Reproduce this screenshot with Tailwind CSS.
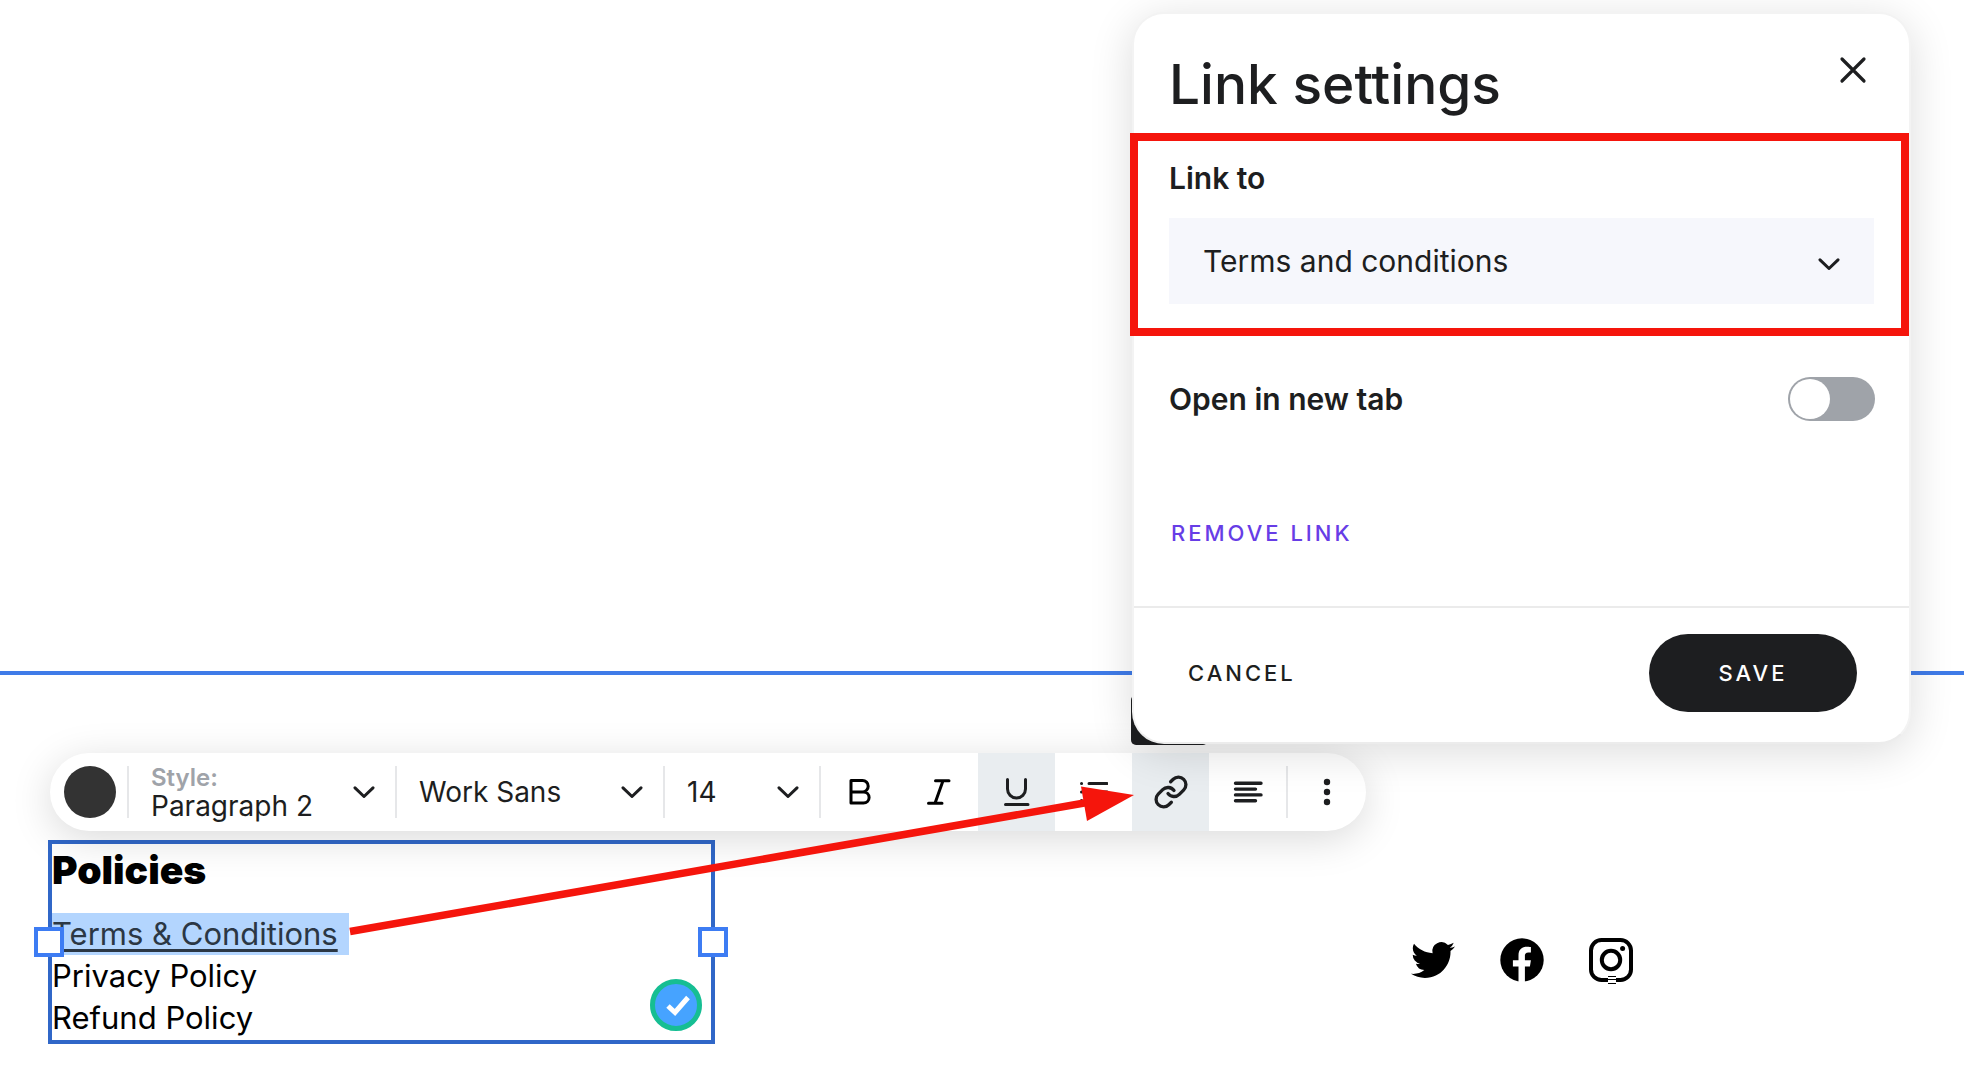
<!DOCTYPE html>
<html lang="en">
<head>
    <meta charset="UTF-8">
    <meta name="viewport" content="width=device-width, initial-scale=1.0">
    <title>Site editor - Link settings</title>
    <script src="https://cdn.jsdelivr.net/npm/@tailwindcss/browser@4"></script>
</head>
<body class="relative min-h-screen overflow-x-hidden bg-white font-['Inter',sans-serif] text-[#1d1e20]">
    <main>
        <section class="h-[675px] border-b-4 border-[#3f7be8]" aria-label="Page section"></section>

        <footer class="relative pt-[78px]">
            <!-- Text toolbar -->
            <div role="toolbar" aria-label="Text formatting" class="relative z-10 ml-[50px] flex h-[78px] w-max items-center rounded-full bg-white pl-[14px] shadow-[0_8px_40px_rgba(0,0,0,0.15)]">
                <button aria-label="Text color" class="mr-[11px] size-[52px] rounded-full bg-[#333]"></button>
                <div class="relative h-[52px] w-[268px] border-l-2 border-[#e6e7e9] pl-[22px]">
                    <label for="text-style" class="block text-[24px] leading-6 font-semibold text-[#9fa3a9]">Style:</label>
                    <select id="text-style" class="block h-8 w-[220px] appearance-none bg-transparent text-[28px] leading-8">
                        <option>Paragraph 2</option>
                    </select>
                    <svg class="pointer-events-none absolute top-[20px] right-[20px] h-[12px] w-[22px]" viewBox="0 0 22 12" fill="none" stroke="currentColor" stroke-width="3" stroke-linecap="round" stroke-linejoin="round"><path d="M2 1.8l9 8.7 9-8.7"/></svg>
                </div>
                <div class="relative flex h-[52px] w-[268px] items-center border-l-2 border-[#e6e7e9] pl-[22px]">
                    <select aria-label="Font" class="w-[220px] appearance-none bg-transparent text-[28px] leading-9">
                        <option>Work Sans</option>
                    </select>
                    <svg class="pointer-events-none absolute top-[20px] right-[20px] h-[12px] w-[22px]" viewBox="0 0 22 12" fill="none" stroke="currentColor" stroke-width="3" stroke-linecap="round" stroke-linejoin="round"><path d="M2 1.8l9 8.7 9-8.7"/></svg>
                </div>
                <div class="relative flex h-[52px] w-[156px] items-center border-l-2 border-[#e6e7e9] pl-[22px]">
                    <select aria-label="Font size" class="w-[110px] appearance-none bg-transparent text-[28px] leading-9">
                        <option>14</option>
                    </select>
                    <svg class="pointer-events-none absolute top-[20px] right-[20px] h-[12px] w-[22px]" viewBox="0 0 22 12" fill="none" stroke="currentColor" stroke-width="3" stroke-linecap="round" stroke-linejoin="round"><path d="M2 1.8l9 8.7 9-8.7"/></svg>
                </div>
                <div class="h-[52px] w-[2px] bg-[#e6e7e9]"></div>
                <div class="ml-[3px] flex h-full">
                    <button aria-label="Bold" class="flex w-[77px] items-center justify-center">
                        <svg class="size-7" viewBox="0 0 28 28" fill="none" stroke="#000" stroke-width="3" stroke-linejoin="round"><path d="M2 2.5h11.5a5.7 5.7 0 0 1 0 11.4H2zM2 13.9h12.5a5.6 5.6 0 0 1 0 11.2H2z"/></svg>
                    </button>
                    <button aria-label="Italic" class="flex w-[77px] items-center justify-center">
                        <svg class="size-7" viewBox="0 0 28 28" fill="none" stroke="#000" stroke-width="3" stroke-linecap="round"><path d="M9.5 2.7h13.5M2.5 25.2h13.5M17 2.7l-8 22.5"/></svg>
                    </button>
                    <button aria-label="Underline" aria-pressed="true" class="flex w-[77px] items-center justify-center bg-[#e9edf0]">
                        <svg class="size-7" viewBox="0 0 28 28" fill="none" stroke="currentColor" stroke-width="3" stroke-linecap="round"><path d="M4.5 1.5v9.5a9 9 0 0 0 18 0v-9.5M2.5 26.5h22.500"/></svg>
                    </button>
                    <button aria-label="Bulleted list" class="flex w-[77px] items-center justify-center">
                        <svg class="size-7" viewBox="0 0 28 28" fill="none" stroke="currentColor" stroke-width="3" stroke-linecap="round"><path d="M1.500 5.500h.1M9 5.500h18M1.500 14h.1M9 14h18M1.500 22.500h.1M9 22.500h18"/></svg>
                    </button>
                    <button aria-label="Link" aria-pressed="true" class="flex w-[77px] items-center justify-center bg-[#e9edf0]">
                        <svg class="size-[36px]" viewBox="0 0 24 24" fill="none" stroke="currentColor" stroke-width="2.2" stroke-linecap="round" stroke-linejoin="round"><path d="M10 13a5 5 0 0 0 7.54.54l3-3a5 5 0 0 0-7.07-7.07l-1.72 1.71"/><path d="M14 11a5 5 0 0 0-7.54-.54l-3 3a5 5 0 0 0 7.07 7.07l1.71-1.71"/></svg>
                    </button>
                    <button aria-label="Align left" class="flex w-[77px] items-center justify-center">
                        <svg class="size-[30px]" viewBox="0 0 30 30" fill="none" stroke="currentColor" stroke-width="3.4" stroke-linecap="round"><path d="M2.500 6.300h25.500M2.500 12.100h20M2.500 17.900h25.500M2.500 23.700h20"/></svg>
                    </button>
                </div>
                <div class="h-[52px] w-[2px] bg-[#e6e7e9]"></div>
                <button aria-label="More options" class="flex h-full w-[78px] items-center justify-center">
                    <svg class="size-7" viewBox="0 0 28 28" fill="currentColor"><circle cx="14" cy="4" r="3.200"/><circle cx="14" cy="14" r="3.200"/><circle cx="14" cy="24" r="3.200"/></svg>
                </button>
            </div>

            <div class="mt-[9px] flex items-start">
                <!-- Selected text block -->
                <div class="relative ml-12 w-[667px] border-4 border-[#3067c8] pt-1 pb-[1px] text-black">
                    <h2 class="text-[39px] leading-[44px] font-black">Policies</h2>
                    <ul class="mt-[21px] text-[31px] leading-[42px]">
                        <li><a href="#terms" class="inline-block bg-[#b3d5fe] pr-[11px] text-[#2b3744] underline decoration-3 underline-offset-4">Terms &amp; Conditions</a></li>
                        <li><a href="#privacy">Privacy Policy</a></li>
                        <li><a href="#refund">Refund Policy</a></li>
                    </ul>
                    <span class="absolute top-1/2 -left-[18px] size-[30px] -translate-y-1/2 border-4 border-[#3d7cf3] bg-white"></span>
                    <span class="absolute top-1/2 -right-[17px] size-[30px] -translate-y-1/2 border-4 border-[#3d7cf3] bg-white"></span>
                    <svg class="absolute right-[9px] bottom-[9px] size-[52px]" viewBox="0 0 52 52" fill="none"><circle cx="26" cy="26" r="23.5" fill="#46a3ff" stroke="#16be93" stroke-width="5"/><path d="M18 27l7 6.5L38 18.5" stroke="#fff" stroke-width="5"/></svg>
                </div>

                <nav aria-label="Social links" class="mt-[98px] ml-[696px] flex gap-[45px] text-black">
                    <a href="#twitter" aria-label="Twitter">
                        <svg class="size-[44px]" viewBox="0 0 24 24" fill="currentColor"><path d="M23.953 4.57a10 10 0 01-2.825.775 4.958 4.958 0 002.163-2.723c-.951.555-2.005.959-3.127 1.184a4.92 4.92 0 00-8.384 4.482C7.69 8.095 4.067 6.13 1.64 3.162a4.822 4.822 0 00-.666 2.475c0 1.71.87 3.213 2.188 4.096a4.904 4.904 0 01-2.228-.616v.06a4.923 4.923 0 003.946 4.827 4.996 4.996 0 01-2.212.085 4.936 4.936 0 004.604 3.417 9.867 9.867 0 01-6.102 2.105c-.39 0-.779-.023-1.17-.067a13.995 13.995 0 007.557 2.209c9.053 0 13.998-7.496 13.998-13.985 0-.21 0-.42-.015-.63A9.935 9.935 0 0024 4.59z"/></svg>
                    </a>
                    <a href="#facebook" aria-label="Facebook">
                        <svg class="size-[44px]" viewBox="0 0 44 44"><circle cx="22" cy="22" r="21.7" fill="#000"/><path d="M18.5 44V28.500h-5.600v-6.300h5.600v-4.900c0-5.600 3.300-8.600 8.300-8.600 2.400 0 4.100.4 4.100.4v5.300h-2.500c-2.600 0-3.500 1.600-3.500 3.300v4.500h6l-1 6.300h-5V44z" fill="#fff"/></svg>
                    </a>
                    <a href="#instagram" aria-label="Instagram">
                        <svg class="h-[46px] w-[44px]" viewBox="0 0 44 46" fill="none" stroke="#000"><rect x="2" y="2" width="40" height="40" rx="10.500" stroke-width="4"/><circle cx="22" cy="22" r="9.200" stroke-width="4"/><circle cx="33.600" cy="10.400" r="2.500" fill="#000" stroke="none"/><g stroke="none"><path d="M19 37h8v9h-8z" fill="#fff"/><path d="M19 38h8v1h-8zM19 41h8v1h-8zM19 45h8v1h-8z" fill="#000"/></g></svg>
                    </a>
                </nav>
            </div>

            <!-- Arrow from the selected text to the link button -->
            <svg class="pointer-events-none absolute top-0 left-0 z-40 h-[393px] w-[1200px]" viewBox="0 675 1200 393"><path d="M350 931.5L1090 802" stroke="#f5150c" stroke-width="7.5"/><path d="M1081 786.5L1134 795l-47 26z" fill="#f5150c"/></svg>
        </footer>
    </main>

    <!-- Tooltip half hidden behind the dialog -->
    <div class="absolute top-[695px] left-[1131px] z-20 h-[50px] w-[77px] rounded-[5px] bg-[#1d1e20]"></div>

    <!-- Link settings dialog -->
    <form role="dialog" aria-labelledby="dialog-title" class="absolute top-3 right-[53px] z-30 w-[779px] rounded-[32px] border-2 border-[#f3f3f3] border-b-[#ececec] bg-white shadow-[0_8px_44px_rgba(0,0,0,0.14)]">
        <div class="flex items-start justify-between pt-[42px] pr-[42px] pb-[21px] pl-[35px]">
            <h1 id="dialog-title" class="text-[55px] leading-[56px] font-medium [font-feature-settings:'calt'_0]">Link settings</h1>
            <button type="button" aria-label="Close">
                <svg class="size-7" viewBox="0 0 28 28" fill="none" stroke="currentColor" stroke-width="3.2" stroke-linecap="round"><path d="M3 3l22 22M25 3L3 25"/></svg>
            </button>
        </div>

        <div class="-ml-1 border-8 border-[#f5150c] pt-[19px] pr-[27px] pb-6 pl-[31px]">
            <label for="link-to" class="block text-[30px] leading-9 font-semibold">Link to</label>
            <div class="relative mt-[22px]">
                <select id="link-to" class="block h-[86px] w-full appearance-none bg-[#f6f7fc] pl-[34px] text-[30px]">
                    <option>Terms and conditions</option>
                </select>
                <svg class="pointer-events-none absolute top-[40px] right-[34px] h-[12px] w-[22px]" viewBox="0 0 22 12" fill="none" stroke="currentColor" stroke-width="3" stroke-linecap="round" stroke-linejoin="round"><path d="M2 1.8l9 8.7 9-8.7"/></svg>
            </div>
        </div>

        <div class="flex items-center justify-between pt-[41px] pr-[34px] pl-[35px]">
            <label for="new-tab" class="text-[30px] leading-[44px] font-semibold">Open in new tab</label>
            <input id="new-tab" type="checkbox" class="h-[44px] w-[87px] appearance-none rounded-full bg-[#9fa3a9] p-[2px] before:block before:size-[40px] before:rounded-full before:bg-white">
        </div>

        <button type="button" class="mt-24 ml-[37px] block text-[22px] leading-8 font-medium tracking-[3px] text-[#673de6]">REMOVE LINK</button>

        <div class="mt-[57px] flex items-center justify-between border-t-2 border-[#ebebeb] pt-[26px] pr-[52px] pb-[30px] pl-[54px]">
            <button type="button" class="text-[22px] font-medium tracking-[3px]">CANCEL</button>
            <button type="submit" class="h-[78px] w-[208px] rounded-full bg-[#1d1e20] text-[22px] font-medium tracking-[3px] text-white">SAVE</button>
        </div>
    </form>
</body>
</html>
